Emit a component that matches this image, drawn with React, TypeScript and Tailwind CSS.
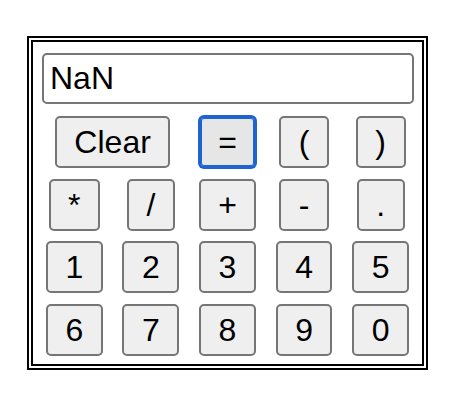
const rows: { label: string; span?: boolean; focused?: boolean }[][] = [
  [{ label: 'Clear', span: true }, { label: '=', focused: true }, { label: '(' }, { label: ')' }],
  [{ label: '*' }, { label: '/' }, { label: '+' }, { label: '-' }, { label: '.' }],
  [{ label: '1' }, { label: '2' }, { label: '3' }, { label: '4' }, { label: '5' }],
  [{ label: '6' }, { label: '7' }, { label: '8' }, { label: '9' }, { label: '0' }],
];

function Key({ label, span, focused }: { label: string; span?: boolean; focused?: boolean }) {
  const base =
    'h-[52px] justify-self-center flex items-center justify-center rounded-[5px] border-2 px-[17.5px] text-[32px] leading-none text-black';
  const look = focused
    ? 'border-[#1e63d2] bg-[#e6e6e6] shadow-[0_0_0_1px_#1e63d2,inset_0_0_0_1px_#1e63d2]'
    : 'border-[#767676] bg-[#efefef]';
  return (
    <button type="button" className={`${base} ${look} ${span ? 'col-span-2' : ''}`}>
      {label}
    </button>
  );
}

export default function App() {
  return (
    <div className="min-h-[414px] w-[462px] bg-white pl-[27px] pt-[36px] font-['Liberation_Sans',Arial,sans-serif]">
      <div className="h-[334px] w-[401px] border-[6px] border-double border-black">
        <input
          readOnly
          value="NaN"
          className="ml-[9px] mt-[11px] block h-[51px] w-[372px] rounded-[5px] border-2 border-[#767676] bg-white px-[6px] text-[32px] text-black outline-none"
        />
        <div className="mt-[12px] grid grid-cols-5 gap-y-[10.5px] px-[3px]">
          {rows.flat().map((k) => (
            <Key key={k.label} {...k} />
          ))}
        </div>
      </div>
    </div>
  );
}
